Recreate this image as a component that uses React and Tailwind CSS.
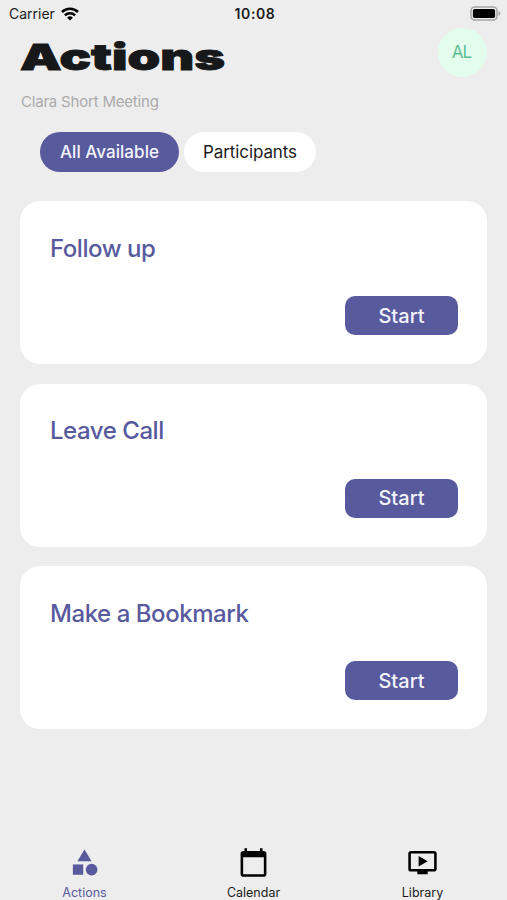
import React, { useState } from 'react';
import clsx from 'clsx';
import { MdCalendarToday, MdCategory, MdOndemandVideo } from 'react-icons/md';

const FILTERS = [
  { label: 'All Available', className: 'w-[139px] font-medium tracking-[0.05px]' },
  { label: 'Participants', className: 'w-[132px] tracking-[-0.1px]' },
];

const ACTIONS = ['Follow up', 'Leave Call', 'Make a Bookmark'];

const TABS = [
  { label: 'Actions', Icon: MdCategory },
  { label: 'Calendar', Icon: MdCalendarToday },
  { label: 'Library', Icon: MdOndemandVideo },
];

function WifiIcon() {
  return (
    <svg width="18" height="14" viewBox="0 0 18 14" fill="none" stroke="#000" strokeWidth="2.5">
      <path d="M1 5a11.3 11.3 0 0 1 16 0" />
      <path d="M3.9 8.4a7.2 7.2 0 0 1 10.2 0" />
      <path d="M9 13.6 6.1 10.7a4.1 4.1 0 0 1 5.8 0z" fill="#000" stroke="none" />
    </svg>
  );
}

function BatteryIcon() {
  return (
    <svg width="31" height="15" viewBox="0 0 31 15">
      <rect x="1" y="1" width="26" height="13" rx="3.8" fill="none" stroke="#a6a6a6" strokeWidth="1.5" />
      <rect x="2.9" y="2.9" width="22.2" height="9.2" rx="1.8" fill="#000" />
      <path d="M28.5 5v5c1.1-.4 1.9-1.4 1.9-2.5s-.8-2.1-1.9-2.5z" fill="#a6a6a6" />
    </svg>
  );
}

function StatusBar() {
  return (
    <div className="flex h-7 items-center pr-[6px] pb-px pl-[9px] text-sm text-[#1c1c1c]">
      <div className="flex flex-1 items-center gap-[6px]">
        <span>Carrier</span>
        <WifiIcon />
      </div>
      <span className="font-semibold tracking-[0.6px]">10:08</span>
      <div className="flex flex-1 justify-end">
        <BatteryIcon />
      </div>
    </div>
  );
}

function ActionCard({ title }) {
  return (
    <section className="flex h-[163px] flex-col justify-between rounded-[20px] bg-white pt-[31.5px] pr-[29px] pb-[29px] pl-[30px]">
      <h2 className="text-2xl font-medium tracking-[-0.45px] text-[#585a9e]">{title}</h2>
      <button
        type="button"
        className="h-[39px] w-[113px] cursor-pointer self-end rounded-[10px] bg-[#585a9e] text-xl font-medium text-[#f3f4fb]"
      >
        Start
      </button>
    </section>
  );
}

export default function App() {
  const [filter, setFilter] = useState('All Available');
  const [tab, setTab] = useState('Actions');

  return (
    <div className="flex h-screen flex-col overflow-hidden bg-[#ededed] font-['Inter',sans-serif]">
      <StatusBar />

      <header className="flex items-start justify-between px-5">
        <div>
          <h1 className="mt-[7px] w-max origin-left scale-x-[1.455] text-4xl leading-[44px] font-black text-[#17181a] [-webkit-text-stroke:0.9px_#17181a]">
            Actions
          </h1>
          <p className="mt-[13px] pl-px text-[15px] leading-5 tracking-[-0.2px] text-[#ababab]">
            Clara Short Meeting
          </p>
        </div>
        <div className="flex size-[49px] items-center justify-center rounded-full bg-[#e3fdec] pr-0.5 text-[17px] tracking-[-0.8px] text-[#5fbd92]">
          AL
        </div>
      </header>

      <div className="mt-5 flex gap-[5px] pl-10">
        {FILTERS.map(({ label, className }) => (
          <button
            key={label}
            type="button"
            onClick={() => setFilter(label)}
            className={clsx(
              'h-10 cursor-pointer rounded-full pt-0.5 text-[17px]',
              filter === label ? 'bg-[#585a9e] text-[#f3f4fb]' : 'bg-white text-[#1c1c1c]',
              className
            )}
          >
            {label}
          </button>
        ))}
      </div>

      <main className="mt-[29px] flex flex-1 flex-col gap-[19.5px] px-5">
        {ACTIONS.map((title) => (
          <ActionCard key={title} title={title} />
        ))}
      </main>

      <nav className="flex h-[53px] shrink-0">
        {TABS.map(({ label, Icon }) => (
          <button
            key={label}
            type="button"
            onClick={() => setTab(label)}
            className={clsx(
              'flex flex-1 cursor-pointer flex-col items-center gap-[7px] text-[12.5px]',
              tab === label ? 'text-[#585a9e]' : 'text-[#1c1c1c]'
            )}
          >
            <Icon className={clsx('size-[31px] shrink-0', tab !== label && 'text-black')} />
            <span className="leading-4">{label}</span>
          </button>
        ))}
      </nav>
    </div>
  );
}
